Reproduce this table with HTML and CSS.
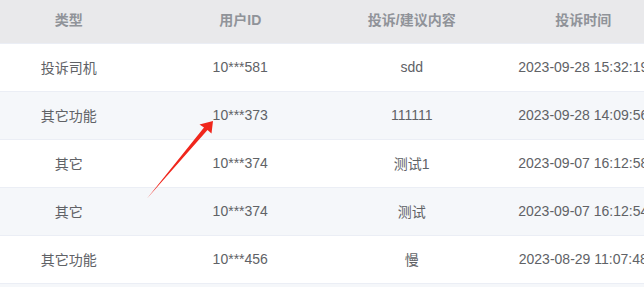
FILE: index.html
```html
<!DOCTYPE html>
<html lang="zh">
<head>
<meta charset="utf-8">
<link rel="stylesheet" href="styles.css">
</head>
<body>
<div class="wrap">
  <table class="tbl">
    <thead>
      <tr><th>类型</th><th>用户ID</th><th>投诉/建议内容</th><th>投诉时间</th></tr>
    </thead>
    <tbody>
      <tr><td>投诉司机</td><td>10***581</td><td>sdd</td><td>2023-09-28 15:32:19</td></tr>
      <tr class="alt"><td>其它功能</td><td>10***373</td><td>111111</td><td>2023-09-28 14:09:56</td></tr>
      <tr><td>其它</td><td>10***374</td><td>测试1</td><td>2023-09-07 16:12:58</td></tr>
      <tr class="alt"><td>其它</td><td>10***374</td><td>测试</td><td>2023-09-07 16:12:54</td></tr>
      <tr><td>其它功能</td><td>10***456</td><td>慢</td><td>2023-08-29 11:07:48</td></tr>
      <tr class="alt"><td>其它</td><td>10***400</td><td>测试</td><td>2023-08-20 10:00:00</td></tr>
    </tbody>
  </table>
  <svg class="arrow" width="644" height="287" viewBox="0 0 644 287">
    <polygon points="213,121 199.5,124.5 204,127.5 147,198.5 207.5,130 211.5,133.5" fill="#f0261c"/>
  </svg>
</div>
</body>
</html>
```
FILE: styles.css
```css
html, body {
  margin: 0;
  padding: 0;
  background: #fff;
  overflow: hidden;
}
.wrap {
  position: relative;
  width: 644px;
  height: 287px;
  overflow: hidden;
}
.tbl {
  margin-left: -17px;
  border-collapse: collapse;
  table-layout: fixed;
  width: 686px;
  font-family: "Liberation Sans", "Noto Sans CJK SC", sans-serif;
  font-size: 14px;
}
.tbl th, .tbl td {
  width: 171.5px;
  text-align: center;
  white-space: nowrap;
  padding: 0;
}
.tbl th {
  height: 43px;
  background: #e9e9eb;
  color: #909399;
  font-weight: bold;
  vertical-align: middle;
  padding-bottom: 4px;
  box-sizing: border-box;
}
.tbl td {
  height: 48px;
  color: #606266;
  border-top: 1px solid #ebeef5;
  box-sizing: border-box;
  vertical-align: middle;
}
.tbl tr.alt td {
  background: #f5f7fa;
}
.arrow {
  position: absolute;
  left: 0;
  top: 0;
}
```
